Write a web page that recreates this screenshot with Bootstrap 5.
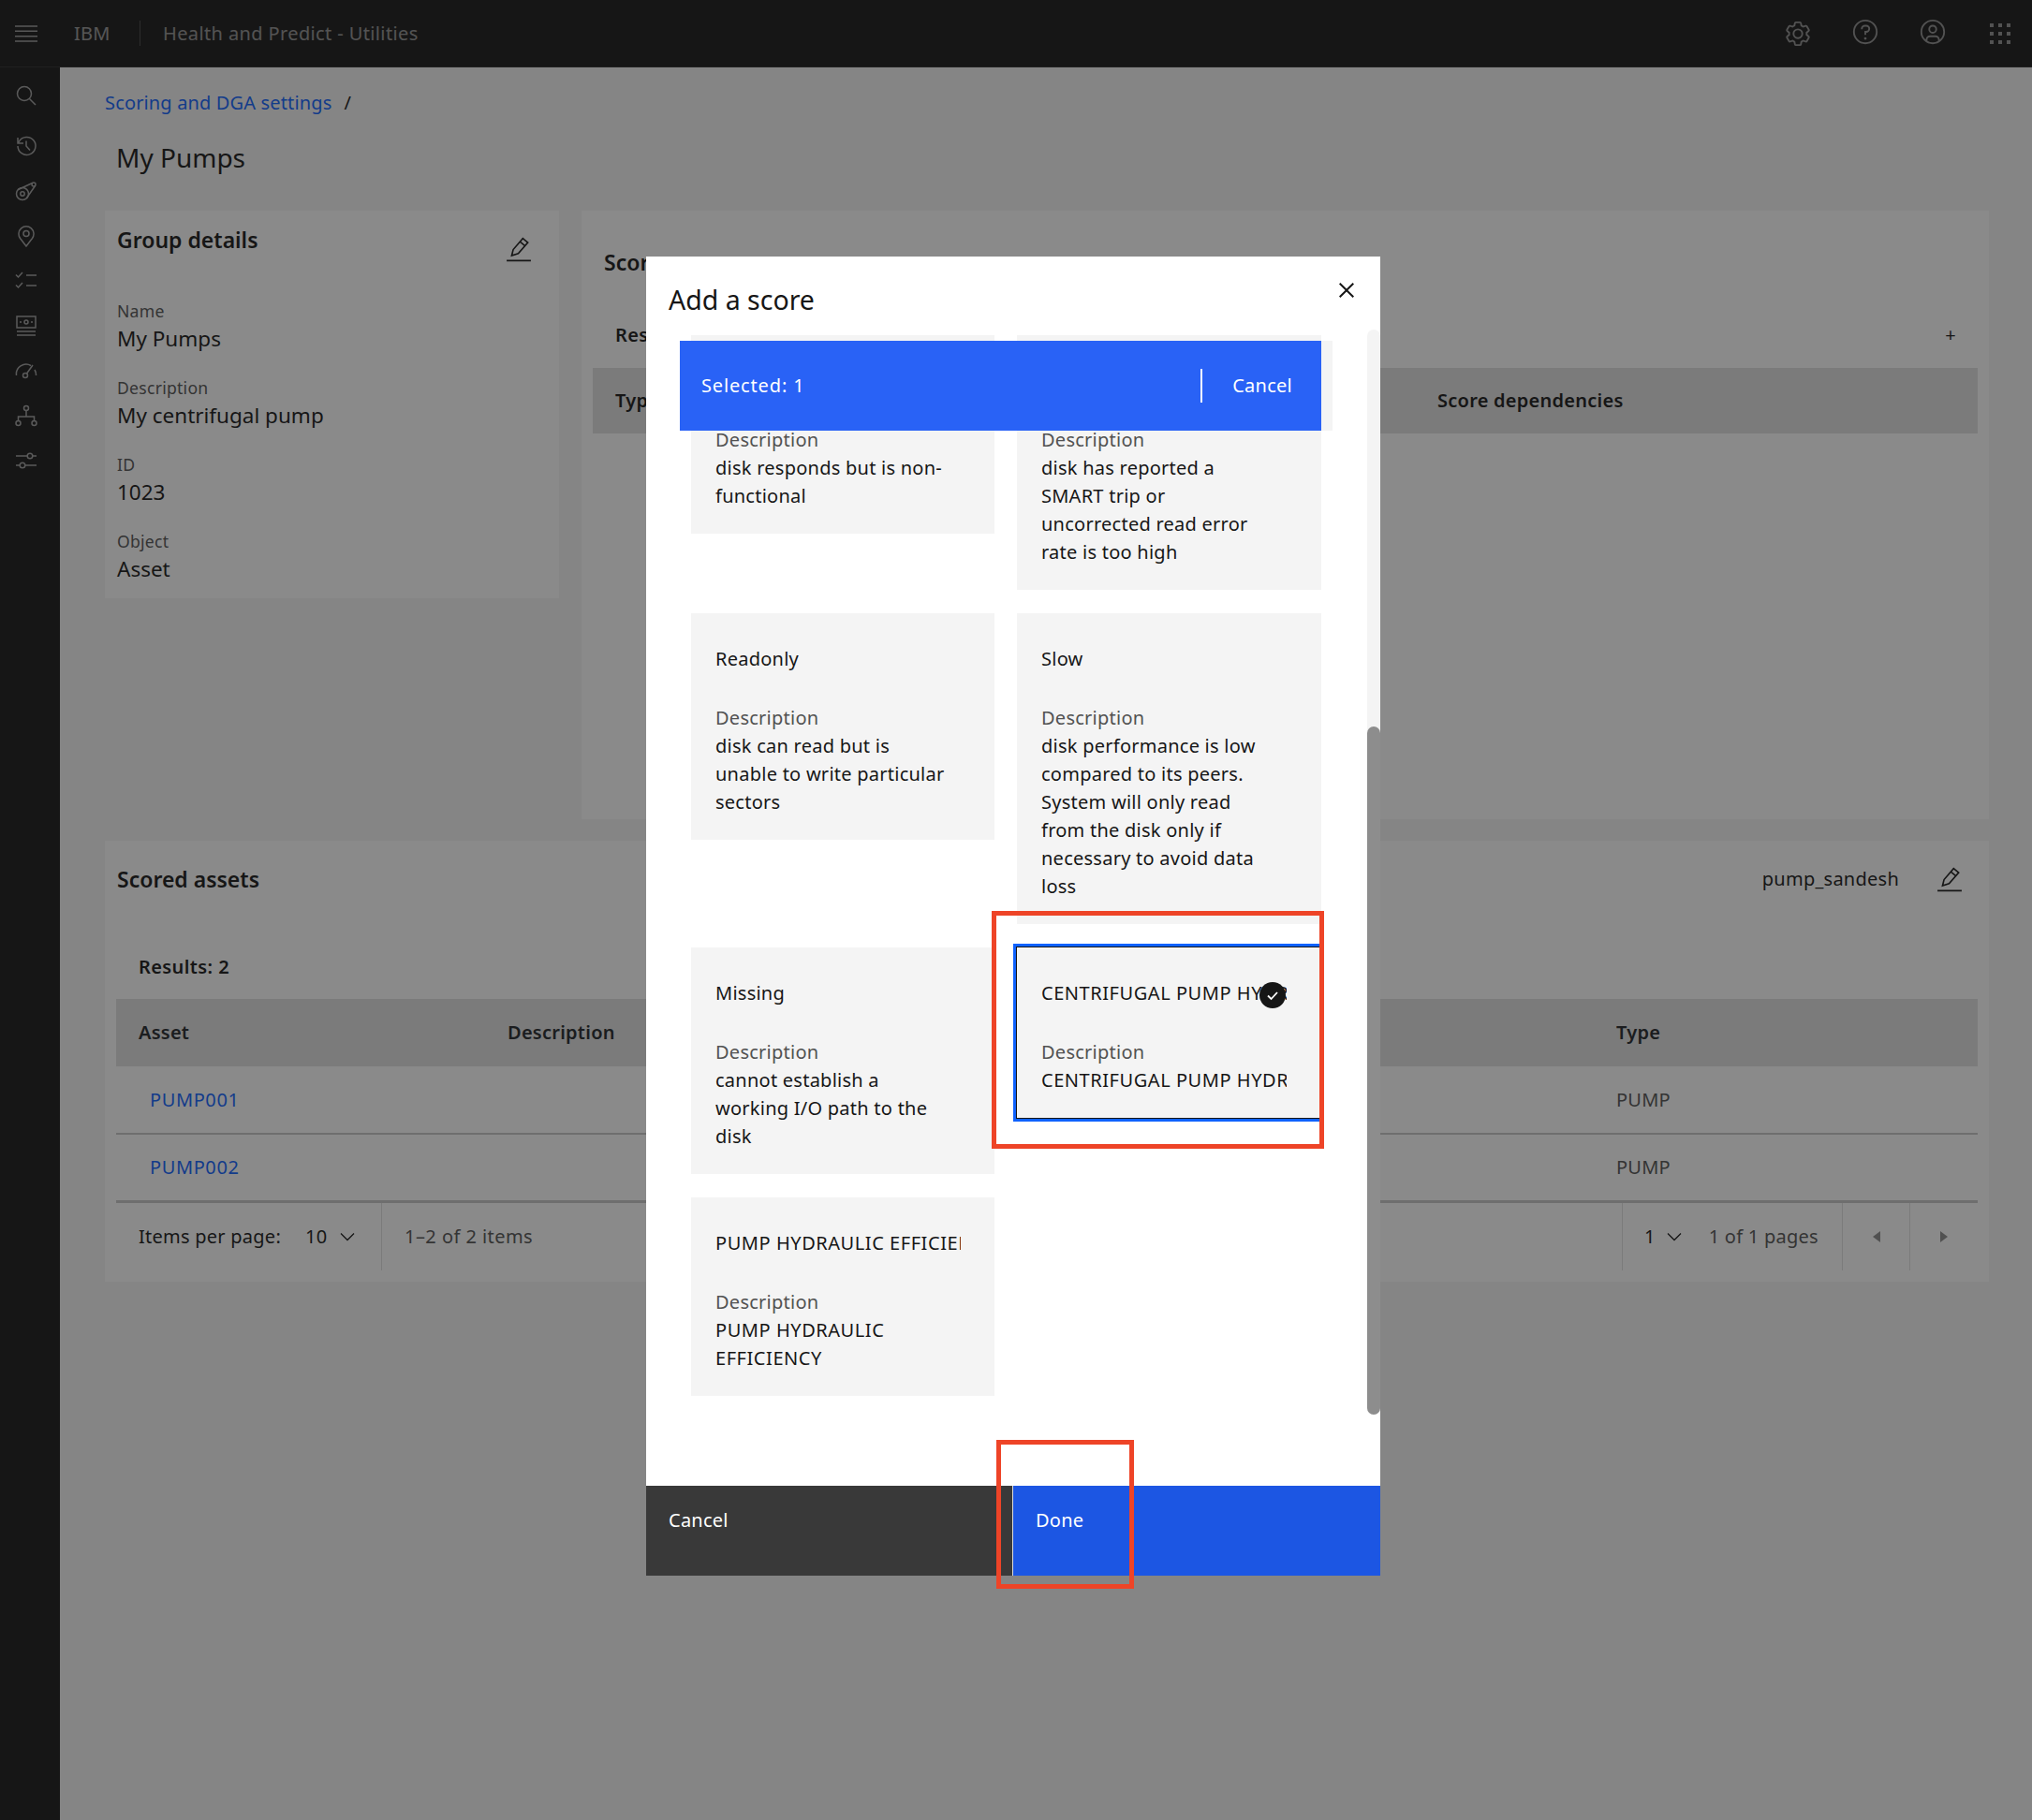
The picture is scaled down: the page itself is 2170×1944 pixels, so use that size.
<!DOCTYPE html>
<html lang="en">
<head>
  <meta charset="UTF-8"/>
  <title>Health and Predict - Utilities</title>
  <link href="https://cdn.jsdelivr.net/npm/bootstrap@5.3.0/dist/css/bootstrap.min.css" rel="stylesheet"/>
  <style>
    body { font-family:"Noto Sans","Open Sans",sans-serif; background:#f4f4f4; color:#161616; min-height:1944px; font-size:20px; letter-spacing:.25px; line-height:30px; }
    .top-bar { height:72px; background:#161616; color:#f4f4f4; border-bottom:1px solid #2a2a2a; }
    .top-menu { width:56px; }
    .brand-name { width:93px; padding-left:23px; font-size:20px; opacity:.58; }
    .brand-sep { width:1px; height:27px; background:#444; }
    .app-title { padding-left:24px; font-size:20px; letter-spacing:.38px; opacity:.55; }
    .top-icons { margin-right:-2px; }
    .top-cell { width:72px; }
    .side-bar { width:64px; background:#161616; padding:6px 8px 0 0; min-height:1872px; }
    .side-item { height:48px; }
    .side-first { margin-bottom:6px; }
    .side-bar svg { width:24px; height:24px; fill:none; stroke:#f4f4f4; stroke-width:1.5; opacity:.62; }
    .page-main { padding:0 46px 0 48px; }
    .crumb { padding-top:23px; height:53px; letter-spacing:.15px; }
    .crumb a { color:#0f62fe; text-decoration:none; }
    .crumb span { padding-left:13px; }
    .page-title { font-size:28px; font-weight:400; letter-spacing:0; line-height:40px; margin:23px 0 37px 12px; }
    .panel-box { background:#fff; }
    .group-panel { width:485px; height:414px; padding:15px 13px; }
    .score-panel { height:650px; margin-left:24px; padding:39px 12px 0; }
    .panel-head { font-size:23px; font-weight:600; letter-spacing:0; line-height:32px; }
    .edit-btn { width:28px; height:28px; fill:none; stroke:#161616; stroke-width:1.5; }
    .edit-group { margin:12px 16px 0 0; }
    .edit-assets { margin:0 16px 0 40px; }
    .field-label { font-size:17.6px; color:#525252; line-height:26px; }
    .field-value { font-size:22.5px; letter-spacing:0; line-height:34px; margin-bottom:22px; }
    .group-fields { margin-top:39px; }
    .results-line { font-weight:600; letter-spacing:.4px; }
    .score-head { height:70px; background:#e0e0e0; font-weight:600; padding-left:24px; }
    .score-cols { width:878px; }
    .score-title { padding-left:12px; margin-bottom:47px; }
    .score-results { padding:0 23px 0 24px; margin-bottom:20px; }
    .assets-panel { height:471px; margin-top:23px; padding:25px 12px 0; }
    .assets-title { padding-left:1px; }
    .results-pad { padding:63px 0 19px 24px; }
    .asset-table { table-layout:fixed; width:100%; margin:0; }
    .asset-table th { background:#e0e0e0; height:72px; padding:0 0 0 24px; vertical-align:middle; font-weight:600; border:0; }
    .asset-table td { height:72px; padding:0 0 0 24px; vertical-align:middle; color:#525252; border-bottom:2px solid #c6c6c6; background:transparent; }
    .asset-table tr:last-child td { border-bottom-width:3px; }
    .asset-table a { color:#0f62fe; text-decoration:none; padding-left:12px; letter-spacing:.6px; }
    .col-asset { width:394px; }
    .col-desc { width:1184px; }
    .pager-bar { height:72px; color:#161616; }
    .pager-cell { height:72px; border-right:1px solid #e0e0e0; }
    .pager-left { width:284px; }
    .pager-count { width:1324px; }
    .pager-pages { width:236px; border-left:1px solid #e0e0e0; padding-left:23px; }
    .pager-nav { width:72px; }
    .pager-muted { color:#525252; letter-spacing:.45px; }
    .pager-num { margin-left:26px; }
    .pager-chev { margin-left:14px; }
    .pager-pages .pager-chev { margin-left:12px; }
    .pager-of { margin-left:29px; letter-spacing:.25px; }
    .score-backdrop { position:absolute; inset:0; height:1944px; background:rgba(22,22,22,.5); }
    .add-modal { position:absolute; left:690px; top:274px; width:784px; height:1409px; background:#fff; overflow:hidden; letter-spacing:.25px; }
    .modal-top { height:84px; padding:28px 0 0 24px; }
    .modal-top h2 { font-size:28.5px; font-weight:400; letter-spacing:0; line-height:36px; margin:0; }
    .close-x { position:absolute; right:20px; top:20px; width:32px; height:32px; fill:#161616; }
    .modal-scroll { padding-left:48px; flex:1 1 auto; overflow:hidden; }
    .tile-grid { display:grid; grid-template-columns:324px 325px; column-gap:24px; row-gap:25px; align-items:start; }
    .score-tile { background:#f4f4f4; padding:34px 36px 25px 26px; }
    .tile-name { white-space:nowrap; overflow:hidden; height:30px; margin-bottom:33px; }
    .tile-caps { letter-spacing:.55px; }
    .tile-label { color:#525252; }
    .tile-text { width:248px; }
    .tile-clip { width:auto; white-space:nowrap; overflow:hidden; }
    .tile-picked { position:relative; box-shadow:0 0 0 1px #161616, 0 0 0 4px #0f62fe; margin-right:2px; padding-right:35px; }
    .tile-check { position:absolute; left:259px; top:37px; width:28px; height:28px; }
    .select-strip { position:absolute; left:36px; top:90px; width:697px; height:96px; background:#f4f4f4; }
    .select-bar { width:685px; height:96px; background:#2962f6; color:#fff; padding-left:23px; }
    .select-count { letter-spacing:.85px; }
    .select-sep { width:2px; height:36px; background:#fff; margin-right:32px; }
    .select-cancel { padding-right:31px; }
    .scroll-track { position:absolute; left:770px; top:78px; width:14px; height:1159px; background:#f4f4f4; border-radius:7px; }
    .scroll-thumb { position:absolute; left:0; top:424px; width:14px; height:735px; background:#8d8d8d; border-radius:7px; }
    .modal-foot { height:96px; flex:none; color:#fff; }
    .foot-cancel { width:391px; background:#393939; padding:22px 0 0 24px; }
    .foot-done { flex:1; background:#1c56e3; border-left:1px solid #ddd; padding:22px 0 0 24px; }
    .mark-box { position:absolute; border:5px solid #ee4427; }
    .mark-tile { left:1059px; top:973px; width:355px; height:254px; }
    .mark-done { left:1064px; top:1538px; width:147px; height:159px; }
    svg { display:block; }
  </style>
</head>
<body class="position-relative">
<header class="top-bar d-flex align-items-center">
  <div class="top-menu d-flex justify-content-center">
    <svg width="26" height="20" viewBox="0 0 26 20" stroke="#f4f4f4" stroke-opacity=".6" stroke-width="1.5"><path d="M1 2h24M1 7.3h24M1 12.7h24M1 18h24"/></svg>
  </div>
  <div class="brand-name">IBM</div>
  <div class="brand-sep"></div>
  <div class="app-title">Health and Predict - Utilities</div>
  <div class="top-icons d-flex align-items-center ms-auto">
    <div class="top-cell d-flex justify-content-center"><svg width="30" height="30" viewBox="0 0 32 32" fill="#8e8e8e"><path d="M27 16.76c0-.25 0-.5 0-.76s0-.51 0-.77l1.92-1.68A2 2 0 0 0 29.3 11L26.94 7a2 2 0 0 0-1.73-1 2 2 0 0 0-.64.1l-2.43.82a11.35 11.35 0 0 0-1.31-.75l-.51-2.52a2 2 0 0 0-2-1.61h-4.68a2 2 0 0 0-2 1.61l-.51 2.52a11.48 11.48 0 0 0-1.32.75l-2.38-.86A2 2 0 0 0 6.79 6a2 2 0 0 0-1.73 1L2.7 11a2 2 0 0 0 .41 2.51L5 15.24c0 .25 0 .5 0 .76s0 .51 0 .77l-1.89 1.68A2 2 0 0 0 2.7 21l2.36 4a2 2 0 0 0 1.73 1 2 2 0 0 0 .64-.1l2.43-.82a11.35 11.35 0 0 0 1.31.75l.51 2.52a2 2 0 0 0 2 1.61h4.72a2 2 0 0 0 2-1.61l.51-2.52a11.48 11.48 0 0 0 1.32-.75l2.42.82a2 2 0 0 0 .64.1 2 2 0 0 0 1.73-1l2.28-4a2 2 0 0 0-.41-2.51ZM25.21 24l-3.43-1.16a8.86 8.86 0 0 1-2.71 1.57L18.36 28h-4.72l-.71-3.55a9.36 9.36 0 0 1-2.7-1.57L6.79 24l-2.36-4 2.72-2.4a8.9 8.9 0 0 1 0-3.13L4.43 12l2.36-4 3.43 1.16a8.86 8.86 0 0 1 2.71-1.57L13.64 4h4.72l.71 3.55a9.36 9.36 0 0 1 2.7 1.57L25.21 8l2.36 4-2.72 2.4a8.9 8.9 0 0 1 0 3.13L27.57 20Z"/><path d="M16 22a6 6 0 1 1 6-6 5.94 5.94 0 0 1-6 6Zm0-10a3.91 3.91 0 0 0-4 4 3.91 3.91 0 0 0 4 4 3.91 3.91 0 0 0 4-4 3.91 3.91 0 0 0-4-4Z"/></svg></div>
    <div class="top-cell d-flex justify-content-center"><svg class="mb-1" width="30" height="30" viewBox="0 0 32 32" fill="#8e8e8e"><path d="M16 2a14 14 0 1 0 14 14A14 14 0 0 0 16 2Zm0 26a12 12 0 1 1 12-12A12 12 0 0 1 16 28Z"/><circle cx="16" cy="23.5" r="1.5"/><path d="M17 8h-1.5a4.49 4.49 0 0 0-4.5 4.5v.5h2v-.5a2.5 2.5 0 0 1 2.5-2.5H17a2.5 2.5 0 0 1 0 5h-2v4.5h2V17a4.5 4.5 0 0 0 0-9Z"/></svg></div>
    <div class="top-cell d-flex justify-content-center"><svg class="mb-1" width="30" height="30" viewBox="0 0 32 32" fill="#8e8e8e"><path d="M16 8a5 5 0 1 0 5 5 5 5 0 0 0-5-5Zm0 8a3 3 0 1 1 3-3 3.0034 3.0034 0 0 1-3 3Z"/><path d="M16 2a14 14 0 1 0 14 14A14.0158 14.0158 0 0 0 16 2Zm-6 24.377V25a3.0033 3.0033 0 0 1 3-3h6a3.0033 3.0033 0 0 1 3 3v1.377a11.8989 11.8989 0 0 1-12 0Zm13.9925-1.4507A5.0016 5.0016 0 0 0 19 20h-6a5.0016 5.0016 0 0 0-4.9925 4.9263 12 12 0 1 1 15.985 0Z"/></svg></div>
    <div class="top-cell d-flex justify-content-center"><svg width="22" height="22" viewBox="0 0 22 22" fill="#8e8e8e"><path d="M0 0h4v4H0zM9 0h4v4H9zM18 0h4v4h-4zM0 9h4v4H0zM9 9h4v4H9zM18 9h4v4h-4zM0 18h4v4H0zM9 18h4v4H9zM18 18h4v4h-4z"/></svg></div>
  </div>
</header>
<div class="d-flex">
  <nav class="side-bar flex-shrink-0">
    <div class="side-item side-first d-flex justify-content-center align-items-center"><svg viewBox="0 0 24 24"><circle cx="10" cy="10" r="7.5"/><path d="M15.5 15.5 22 22"/></svg></div>
    <div class="side-item d-flex justify-content-center align-items-center"><svg viewBox="0 0 24 24"><path d="M3 3v6h6M3 12a9.5 9.5 0 1 0 1.500-5.200L3 9M12 6.500V12l4 4.500"/></svg></div>
    <div class="side-item d-flex justify-content-center align-items-center"><svg viewBox="0 0 24 24"><circle cx="8" cy="15" r="6.5"/><circle cx="8" cy="15" r="2.200"/><circle cx="20" cy="5" r="2"/><path d="M3.500 10.500 18.500 3.500M12.500 19.500 21.500 6.500"/></svg></div>
    <div class="side-item d-flex justify-content-center align-items-center"><svg viewBox="0 0 24 24"><path d="M12 23 5.500 14.500A8 8 0 1 1 18.500 14.500Z"/><circle cx="12" cy="9.500" r="3"/></svg></div>
    <div class="side-item d-flex justify-content-center align-items-center"><svg viewBox="0 0 24 24"><path d="M1 5.500 3.500 8 8 3M1 16.500 3.500 19 8 14M12 6h11M12 17h11"/></svg></div>
    <div class="side-item d-flex justify-content-center align-items-center"><svg viewBox="0 0 24 24"><rect x="2" y="2" width="20" height="12"/><circle cx="12" cy="8" r="2"/><path d="M6 7v2M18 7v2M2 18h20M2 22h20"/></svg></div>
    <div class="side-item d-flex justify-content-center align-items-center"><svg viewBox="0 0 24 24"><path d="M1.500 17A10.500 10.500 0 0 1 17 6.500M22.500 17a10 10 0 0 0-1.500-6M12.500 15 19 6"/><circle cx="11" cy="17" r="2.500"/></svg></div>
    <div class="side-item d-flex justify-content-center align-items-center"><svg viewBox="0 0 24 24"><circle cx="12" cy="4" r="2.500"/><circle cx="3.500" cy="20" r="2.500"/><circle cx="20.500" cy="20" r="2.500"/><path d="M12 6.500V13M3.500 17.500V13h17v4.500"/></svg></div>
    <div class="side-item d-flex justify-content-center align-items-center"><svg viewBox="0 0 24 24"><circle cx="16" cy="7" r="2.800"/><circle cx="8" cy="17" r="2.800"/><path d="M1 7h12M19 7h4M1 17h4M11 17h12"/></svg></div>
  </nav>
  <main class="page-main flex-grow-1">
    <div class="crumb"><a href="#">Scoring and DGA settings</a><span>/</span></div>
    <h1 class="page-title">My Pumps</h1>
    <div class="d-flex align-items-start">
      <section class="panel-box group-panel flex-shrink-0">
        <div class="d-flex justify-content-between">
          <div class="panel-head">Group details</div>
          <svg class="edit-btn edit-group" viewBox="0 0 26 26"><path d="M6 19.500 7.500 13.500 17 2.500 22 6.500 12.500 17.500 6 19.500ZM14.500 6 19.500 10M1 24.500h24"/></svg>
        </div>
        <div class="group-fields">
          <div class="field-label">Name</div><div class="field-value">My Pumps</div>
          <div class="field-label">Description</div><div class="field-value">My centrifugal pump</div>
          <div class="field-label">ID</div><div class="field-value">1023</div>
          <div class="field-label">Object</div><div class="field-value">Asset</div>
        </div>
      </section>
      <section class="panel-box score-panel flex-grow-1">
        <div class="panel-head score-title">Scores</div>
        <div class="d-flex justify-content-between results-line score-results"><span>Results: 0</span><span class="fw-normal">+</span></div>
        <div class="score-head d-flex align-items-center"><div class="score-cols">Type</div><div>Score dependencies</div></div>
      </section>
    </div>
    <section class="panel-box assets-panel">
      <div class="d-flex justify-content-between align-items-center">
        <div class="panel-head assets-title">Scored assets</div>
        <div class="d-flex align-items-center"><span>pump_sandesh</span><svg class="edit-btn edit-assets" viewBox="0 0 26 26"><path d="M6 19.500 7.500 13.500 17 2.500 22 6.500 12.500 17.500 6 19.500ZM14.500 6 19.500 10M1 24.500h24"/></svg></div>
      </div>
      <div class="results-line results-pad">Results: 2</div>
      <table class="table asset-table">
        <colgroup><col class="col-asset"/><col class="col-desc"/><col/></colgroup>
        <thead><tr><th>Asset</th><th>Description</th><th>Type</th></tr></thead>
        <tbody>
          <tr><td><a href="#">PUMP001</a></td><td></td><td>PUMP</td></tr>
          <tr><td><a href="#">PUMP002</a></td><td></td><td>PUMP</td></tr>
        </tbody>
      </table>
      <div class="pager-bar d-flex">
        <div class="pager-cell pager-left d-flex align-items-center ps-4">
          <span>Items per page:</span><span class="pager-num">10</span>
          <svg class="pager-chev" width="16" height="10" viewBox="0 0 16 10" fill="none" stroke="#161616" stroke-width="1.300"><path d="M1 1.500 8 8.500 15 1.500"/></svg>
        </div>
        <div class="pager-count d-flex align-items-center ps-4 pager-muted">1–2 of 2 items</div>
        <div class="pager-cell pager-pages d-flex align-items-center">
          <span>1</span><svg class="pager-chev" width="16" height="10" viewBox="0 0 16 10" fill="none" stroke="#161616" stroke-width="1.300"><path d="M1 1.500 8 8.500 15 1.500"/></svg>
          <span class="pager-of pager-muted">1 of 1 pages</span>
        </div>
        <div class="pager-cell pager-nav d-flex align-items-center justify-content-center"><svg width="8" height="12" viewBox="0 0 8 12" fill="#8d8d8d"><path d="M8 0v12L0 6z"/></svg></div>
        <div class="pager-nav d-flex align-items-center justify-content-center"><svg width="8" height="12" viewBox="0 0 8 12" fill="#8d8d8d"><path d="M0 0v12l8-6z"/></svg></div>
      </div>
    </section>
  </main>
</div>

<div class="score-backdrop"></div>

<div class="add-modal d-flex flex-column">
  <div class="modal-top flex-shrink-0"><h2>Add a score</h2></div>
  <svg class="close-x" viewBox="0 0 32 32"><path d="M24 9.400 22.600 8 16 14.600 9.400 8 8 9.400 14.600 16 8 22.600 9.400 24 16 17.400 22.600 24 24 22.600 17.400 16 24 9.400z"/></svg>
  <div class="modal-scroll">
    <div class="tile-grid">
      <div class="score-tile"><div class="tile-name">&nbsp;</div><div class="tile-label">Description</div><div class="tile-text">disk responds but is non-functional</div></div>
      <div class="score-tile"><div class="tile-name">&nbsp;</div><div class="tile-label">Description</div><div class="tile-text">disk has reported a SMART trip or uncorrected read error rate is too high</div></div>
      <div class="score-tile"><div class="tile-name">Readonly</div><div class="tile-label">Description</div><div class="tile-text">disk can read but is unable to write particular sectors</div></div>
      <div class="score-tile"><div class="tile-name">Slow</div><div class="tile-label">Description</div><div class="tile-text">disk performance is low compared to its peers. System will only read from the disk only if necessary to avoid data loss</div></div>
      <div class="score-tile"><div class="tile-name">Missing</div><div class="tile-label">Description</div><div class="tile-text">cannot establish a working I/O path to the disk</div></div>
      <div class="score-tile tile-picked"><div class="tile-name tile-caps">CENTRIFUGAL PUMP HYDRAULIC EFFICIENCY</div><div class="tile-label">Description</div><div class="tile-text tile-clip tile-caps">CENTRIFUGAL PUMP HYDRAULIC EFFICIENCY</div>
        <svg class="tile-check" viewBox="0 0 28 28"><circle cx="14" cy="14" r="14" fill="#161616"/><path d="M9 14.500 12.500 18 19 11" fill="none" stroke="#fff" stroke-width="1.800"/></svg>
      </div>
      <div class="score-tile"><div class="tile-name tile-caps">PUMP HYDRAULIC EFFICIENCY</div><div class="tile-label">Description</div><div class="tile-text tile-caps">PUMP HYDRAULIC EFFICIENCY</div></div>
    </div>
  </div>
  <div class="select-strip">
    <div class="select-bar d-flex align-items-center">
      <span class="select-count">Selected: 1</span>
      <div class="select-sep ms-auto"></div>
      <span class="select-cancel">Cancel</span>
    </div>
  </div>
  <div class="scroll-track"><div class="scroll-thumb"></div></div>
  <div class="modal-foot d-flex">
    <div class="foot-cancel">Cancel</div>
    <div class="foot-done">Done</div>
  </div>
</div>

<div class="mark-box mark-tile"></div>
<div class="mark-box mark-done"></div>
<script src="https://cdn.jsdelivr.net/npm/bootstrap@5.3.0/dist/js/bootstrap.bundle.min.js"></script>
</body>
</html>
